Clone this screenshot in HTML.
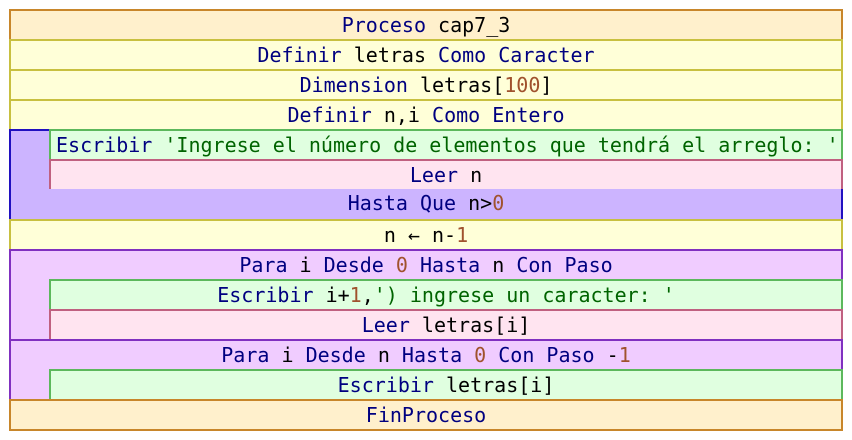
<!DOCTYPE html>
<html><head><meta charset="utf-8"><style>
body{margin:0;width:852px;height:440px;background:#fff;position:relative;overflow:hidden;font-family:"DejaVu Sans Mono","Liberation Mono",monospace;font-size:20px;}
.b{position:absolute;box-sizing:border-box;border:2px solid;text-align:center;line-height:29px;white-space:pre;color:#000;}
.k{color:#000080}.s{color:#006400}.n{color:#a0522d}
.o{background:#fff0cc;border-color:#c8862a}
.y{background:#ffffd8;border-color:#c8c040}
.g{background:#e0ffe0;border-color:#5cb85c}
.p{background:#ffe4f0;border-color:#c06080}
.r{background:#ccb4ff;border-color:#2010c0}
.f{background:#f0ccff;border-color:#8030c0}
</style></head><body>
<div class="b o" style="left:9px;top:9px;width:834px;height:32px"><span class="k">Proceso</span> cap7_3</div>
<div class="b y" style="left:9px;top:39px;width:834px;height:32px"><span class="k">Definir</span> letras <span class="k">Como Caracter</span></div>
<div class="b y" style="left:9px;top:69px;width:834px;height:32px"><span class="k">Dimension</span> letras[<span class="n">100</span>]</div>
<div class="b y" style="left:9px;top:99px;width:834px;height:32px"><span class="k">Definir</span> n,i <span class="k">Como Entero</span></div>
<div class="b r" style="left:9px;top:129px;width:834px;height:92px;line-height:0"></div>
<div class="b g" style="left:49px;top:129px;width:794px;height:32px;text-align:left;padding-left:5px"><span class="k">Escribir</span> <span class="s">'Ingrese el número de elementos que tendrá el arreglo: '</span></div>
<div class="b p" style="left:49px;top:159px;width:794px;height:32px"><span class="k">Leer</span> n</div>
<div class="b r" style="left:9px;top:189px;width:834px;height:32px;border-top:none;line-height:29px"><span class="k">Hasta Que</span> n&gt;<span class="n">0</span></div>
<div class="b y" style="left:9px;top:219px;width:834px;height:32px">n ← n-<span class="n">1</span></div>
<div class="b f" style="left:9px;top:249px;width:834px;height:92px"><span class="k">Para</span> i <span class="k">Desde</span> <span class="n">0</span> <span class="k">Hasta</span> n <span class="k">Con Paso</span></div>
<div class="b g" style="left:49px;top:279px;width:794px;height:32px"><span class="k">Escribir</span> i+<span class="n">1</span>,<span class="s">') ingrese un caracter: '</span></div>
<div class="b p" style="left:49px;top:309px;width:794px;height:32px"><span class="k">Leer</span> letras[i]</div>
<div class="b f" style="left:9px;top:339px;width:834px;height:62px"><span class="k">Para</span> i <span class="k">Desde</span> n <span class="k">Hasta</span> <span class="n">0</span> <span class="k">Con Paso</span> -<span class="n">1</span></div>
<div class="b g" style="left:49px;top:369px;width:794px;height:32px"><span class="k">Escribir</span> letras[i]</div>
<div class="b o" style="left:9px;top:399px;width:834px;height:32px"><span class="k">FinProceso</span></div>
</body></html>
